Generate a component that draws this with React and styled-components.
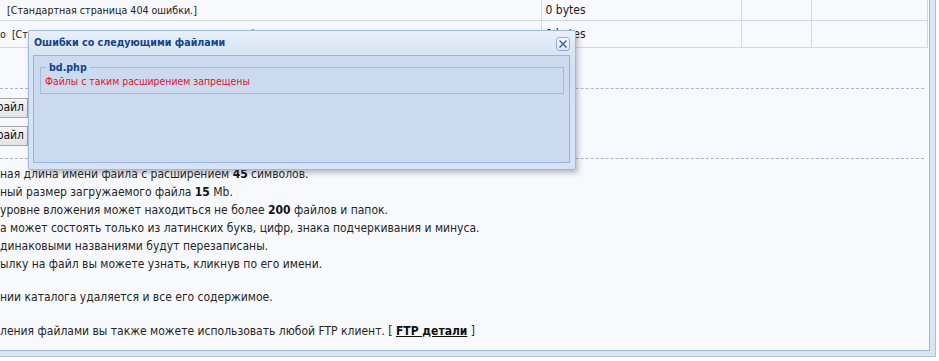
import styled, { createGlobalStyle } from 'styled-components';

const Global = createGlobalStyle`
  body { margin: 0; background: #fff; font-family: "DejaVu Sans Condensed", "DejaVu Sans", sans-serif; font-size: 11px; color: #222; }
`;

const Page = styled.div`
  position: relative;
  width: 939px;
  height: 361px;
  overflow: hidden;
`;

const Frame = styled.div`
  width: 931px;
  height: 352px;
  padding: 0 4px 4px 0;
  background: #d9e5f5;
  border-right: 1px solid #b4bfd0;
  border-bottom: 1px solid #b4bfd0;
`;

const Content = styled.div`
  width: 930px;
  height: 351px;
  box-sizing: border-box;
  background: #f7f9fd;
  border-right: 1px solid #9fb7d9;
  border-bottom: 1px solid #9fb7d9;
  display: flex;
  flex-direction: column;
  overflow: hidden;
`;

const Table = styled.table`
  width: 927px;
  border-collapse: collapse;
  table-layout: fixed;
  font-size: 10.6px;
  td {
    border-right: 1px solid #cfd8e6;
    border-bottom: 1px solid #cfd8e6;
    padding: 0 4px;
    white-space: nowrap;
    overflow: hidden;
  }
`;

const Row = styled.tr`
  height: ${p => p.$h}px;
`;

const NameCell = styled.td`
  && { padding-left: ${p => p.$pad}px; }
`;

const SizeCell = styled.td`
  && { font-size: 12px; }
`;

const Dashed = styled.div`
  width: 924px;
  border-top: 1px dashed #a9b6cc;
  margin-top: ${p => p.$top}px;
`;

const Buttons = styled.div`
  display: flex;
  flex-direction: column;
  gap: 8px;
  margin-top: 9px;
`;

const Button = styled.div`
  width: 38px;
  height: 20px;
  box-sizing: border-box;
  margin-left: -10px;
  border: 1px solid #a7a7a7;
  border-left: none;
  background: linear-gradient(#f6f6f6, #e3e3e3);
  font-size: 12px;
  line-height: 17px;
  text-align: right;
  padding-right: 3px;
  color: #111;
  overflow: hidden;
  white-space: nowrap;
`;

const Notes = styled.div`
  margin-top: 6px;
  line-height: 18px;
  font-size: 12px;
  color: #262626;
`;

const Line = styled.div`
  margin-top: ${p => p.$gap || 0}px;
  white-space: nowrap;
  b { color: #111; }
`;

const FtpLink = styled.a`
  font-weight: bold;
  color: #111;
  text-decoration: underline;
`;

const Window = styled.div`
  position: absolute;
  left: 28px;
  top: 30px;
  width: 548px;
  height: 140px;
  box-sizing: border-box;
  border: 1px solid #a3b8d6;
  border-radius: 2px;
  background: linear-gradient(#e8f0fb, #d3e1f3 30px, #d6e3f4);
  box-shadow: 2px 3px 5px rgba(60, 70, 90, 0.35);
  padding: 0 5px 6px 4px;
  display: flex;
  flex-direction: column;
`;

const TitleBar = styled.div`
  height: 24px;
  display: flex;
  align-items: center;
  justify-content: space-between;
  padding-left: 1px;
  font-weight: bold;
  font-size: 10.6px;
  color: #15428b;
  span { margin-top: -2px; }
`;

const CloseBtn = styled.div`
  width: 14px;
  height: 14px;
  box-sizing: border-box;
  border: 1px solid #93acd4;
  border-radius: 3px;
  background: linear-gradient(#f8fbff, #dbe6f5);
  display: flex;
  align-items: center;
  justify-content: center;
  margin-top: 2px;
`;

const Body = styled.div`
  flex: 1;
  border: 1px solid #99b5df;
  background: #cbdaee;
  padding: 5px 5px 0 6px;
`;

const Fieldset = styled.fieldset`
  margin: 0;
  border: 1px solid #a3bbe0;
  padding: 2px 4px 5px 4px;
  legend {
    padding: 0 3px;
    margin-left: 1px;
    font-weight: bold;
    font-size: 10.6px;
    color: #15428b;
  }
`;

const ErrorText = styled.div`
  color: #e8102e;
  font-size: 10.4px;
  line-height: 13px;
`;

export default function App() {
  return (
    <Page>
      <Global />
      <Frame>
        <Content>
          <Table>
            <colgroup>
              <col style={{ width: 541 }} />
              <col style={{ width: 200 }} />
              <col style={{ width: 70 }} />
              <col style={{ width: 116 }} />
            </colgroup>
            <tbody>
              <Row $h={20}>
                <NameCell $pad={7}>[Стандартная страница 404 ошибки.]</NameCell>
                <SizeCell>0 bytes</SizeCell>
                <td></td>
                <td></td>
              </Row>
              <Row $h={27}>
                <NameCell $pad={0}>о&nbsp;&nbsp;[Страница, на которую перенаправляется ошибка.]</NameCell>
                <SizeCell>0 bytes</SizeCell>
                <td></td>
                <td></td>
              </Row>
            </tbody>
          </Table>
          <Dashed $top={40} />
          <Buttons>
            <Button>файл</Button>
            <Button>файл</Button>
          </Buttons>
          <Dashed $top={12} />
          <Notes>
            <Line>ная длина имени файла с расширением <b>45</b> символов.</Line>
            <Line>ный размер загружаемого файла <b>15</b> Mb.</Line>
            <Line>уровне вложения может находиться не более <b>200</b> файлов и папок.</Line>
            <Line>а может состоять только из латинских букв, цифр, знака подчеркивания и минуса.</Line>
            <Line>динаковыми названиями будут перезаписаны.</Line>
            <Line>ылку на файл вы можете узнать, кликнув по его имени.</Line>
            <Line $gap={15}>нии каталога удаляется и все его содержимое.</Line>
            <Line $gap={16}>ления файлами вы также можете использовать любой FTP клиент. [ <FtpLink>FTP детали</FtpLink> ]</Line>
          </Notes>
        </Content>
      </Frame>
      <Window>
        <TitleBar>
          <span>Ошибки со следующими файлами</span>
          <CloseBtn>
            <svg width="10" height="10" viewBox="0 0 10 10">
              <path d="M1.5 1.5 L8.5 8.5 M8.5 1.5 L1.5 8.5" stroke="#3b5d92" strokeWidth="1.4" fill="none" />
            </svg>
          </CloseBtn>
        </TitleBar>
        <Body>
          <Fieldset>
            <legend>bd.php</legend>
            <ErrorText>Файлы с таким расширением запрещены</ErrorText>
          </Fieldset>
        </Body>
      </Window>
    </Page>
  );
}
